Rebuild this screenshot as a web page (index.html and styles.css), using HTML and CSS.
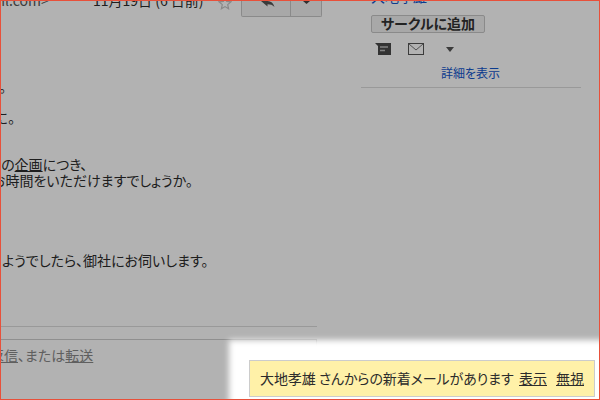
FILE: index.html
```html
<!DOCTYPE html>
<html lang="ja">
<head>
<meta charset="utf-8">
<title>新着メール通知</title>
<link rel="stylesheet" href="styles.css">
</head>
<body>
<div class="frame">
  <div class="page">
    <main class="mail">
      <header class="mail-head">
        <span class="sender">taichi@gmail.com&gt;</span>
        <span class="date">11月19日 (6 日前)</span>
        <svg class="star" width="14" height="14" viewBox="0 0 14 14"><path d="M7 1.500l1.700 3.900 4.200.4-3.200 2.800.9 4.100L7 10.600l-3.600 2.100.9-4.100L1.100 5.800l4.200-.4z" fill="none" stroke="#c4c4c4" stroke-width="1.200"/></svg>
        <div class="actions">
          <button class="act act-reply"><svg class="reply-ic" width="14" height="6" viewBox="0 0 14 6"><path d="M0 0h6.500c3.500 0 6 2 7 6-2-2-4-2.700-7-2.700V5.500z" fill="#555"/></svg></button>
          <button class="act act-more"><svg width="7" height="3" viewBox="0 0 7 3"><path d="M0 0h7L3.500 3z" fill="#444"/></svg></button>
        </div>
      </header>
      <div class="body">
        <p class="l l1"><span>ご確認をお願いいたします。</span></p>
        <p class="l l2"><span>よろしくお願いします。に。</span></p>
        <p class="l l3">この<span class="und">企画</span>につき、</p>
        <p class="l l4">お時間をいただけますでしょうか。</p>
        <p class="l l5">ようでしたら、御社にお伺いします。</p>
      </div>
      <div class="rule"></div>
      <div class="reply-box"><span class="hint"><span class="und">返信</span>、または<span class="und">転送</span></span></div>
    </main>
    <aside class="side">
      <a class="name">大地孝雄</a>
      <button class="circle">サークルに追加</button>
      <div class="icons">
        <svg width="16" height="12" viewBox="0 0 16 12"><path d="M0 0h16v12H3V3z" fill="#4a4a4a"/><path d="M5 4h8M5 7.500h5" stroke="#bbb" stroke-width="1.300"/></svg>
        <svg class="mail-ic" width="16" height="12" viewBox="0 0 16 12"><rect x=".5" y=".5" width="15" height="11" fill="none" stroke="#555"/><path d="M1 1l7 6 7-6" fill="none" stroke="#777"/></svg>
        <svg class="caret" width="8" height="5" viewBox="0 0 8 5"><path d="M0 0h8L4 5z" fill="#555"/></svg>
      </div>
      <a class="details">詳細を表示</a>
      <div class="side-rule"></div>
    </aside>
  </div>
  <div class="overlay"></div>
  <div class="toast">
    <span class="msg">大地孝雄 さんからの新着メールがあります</span>
    <a class="tlink">表示</a>
    <a class="tlink">無視</a>
  </div>
</div>
</body>
</html>
```
FILE: styles.css
```css
* { box-sizing: border-box; }
html, body { margin: 0; padding: 0; }
body {
  width: 600px;
  height: 400px;
  overflow: hidden;
  font-family: "Noto Sans CJK JP", "Liberation Sans", sans-serif;
  font-feature-settings: "palt";
  color: #2c2c2c;
}
.frame {
  position: relative;
  width: 600px;
  height: 400px;
  border: 1px solid #e8503a;
  overflow: hidden;
  background: #fff;
}
.page { display: flex; height: 398px; }
.mail { width: 316px; flex: none; }
.mail-head {
  display: flex;
  align-items: flex-start;
  height: 15px;
  font-size: 14px;
  line-height: 18px;
}
.sender { margin-left: -78px; width: 116px; margin-top: -10px; color: #555; white-space: nowrap; flex: none; }
.date { margin-left: 54px; width: 125px; margin-top: -10px; white-space: nowrap; flex: none; }
.star { margin-top: -5px; flex: none; }
.actions { display: flex; margin-left: 9px; height: 16px; }
.act {
  display: flex;
  justify-content: center;
  align-items: flex-start;
  padding: 0;
  height: 16px;
  background: #f1f1f1;
  border: 1px solid #c6c6c6;
  border-top: 0;
}
.act-reply { width: 50px; border-radius: 0 0 0 2px; }
.reply-ic { margin-left: 4px; }
.act-more { width: 31px; border-left: 0; border-radius: 0 0 2px 0; }
.body { font-size: 14px; line-height: 16px; padding-top: 62px; height: 310px; }
.l { margin: 0; white-space: nowrap; }
.l1 { display: flex; justify-content: flex-end; width: 5px; }
.l2 { display: flex; justify-content: flex-end; width: 14px; margin-top: 15px; }
.l1 span, .l2 span { flex: none; }
.l3 { margin-left: -12px; margin-top: 31px; }
.l4 { margin-left: -9px; }
.l5 { margin-left: 1px; margin-top: 64px; }
.und { text-decoration: underline; }
.rule { height: 1px; background: #dcdcdc; }
.reply-box {
  margin-top: 12px;
  height: 80px;
  border: 1px solid #cdcdcd;
  border-left: 0;
  padding-top: 6px;
  font-size: 14px;
  line-height: 18px;
  color: #888;
  white-space: nowrap;
}
.hint { margin-left: -11px; display: block; }
.side { margin-left: 44px; width: 220px; flex: none; }
.name { display: block; margin: -14px 0 0 10px; height: 18px; font-size: 14px; line-height: 18px; color: #15c; }
.circle {
  display: block;
  margin: 10px 0 0 10px;
  width: 114px;
  height: 18px;
  padding: 0 0 1px;
  font: 700 14px/15px "Noto Sans CJK JP", sans-serif;
  font-feature-settings: "palt";
  color: #333;
  background: #f1f1f1;
  border: 1px solid #c6c6c6;
  border-radius: 2px;
}
.icons { display: flex; align-items: center; margin: 10px 0 0 14px; height: 12px; }
.mail-ic { margin-left: 17px; }
.caret { margin-left: 22px; }
.details { display: block; margin: 10px 0 0 80px; font-size: 12px; line-height: 16px; color: #15c; }
.side-rule { margin-top: 6px; height: 1px; background: #dcdcdc; }
.overlay { position: absolute; inset: 0; background: rgba(0, 0, 0, .3); }
.toast {
  position: absolute;
  left: 248px;
  top: 359px;
  width: 346px;
  height: 37px;
  display: flex;
  align-items: center;
  gap: 9px;
  padding: 0 0 2px 10px;
  font-size: 14px;
  line-height: 18px;
  background: #fff1a8;
  border: 1px solid #ccc;
  box-shadow: 0 0 6px 20px #fff;
}
.msg { width: 250px; white-space: nowrap; letter-spacing: -.1px; }
.tlink { text-decoration: underline; white-space: nowrap; }
```
